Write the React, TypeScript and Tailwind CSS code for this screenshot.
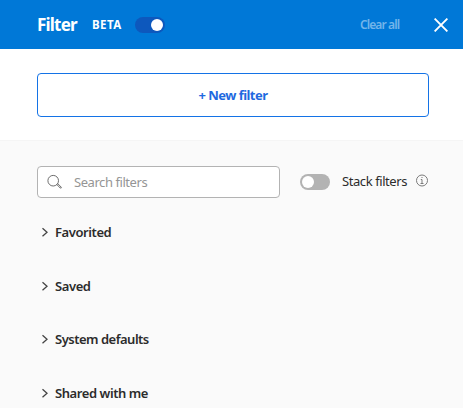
const sections = [
  { label: 'Favorited', tracking: 'tracking-[-0.42px]' },
  { label: 'Saved', tracking: 'tracking-[-0.4px]' },
  { label: 'System defaults', tracking: 'tracking-[-0.5px]' },
  { label: 'Shared with me', tracking: 'tracking-[-0.43px]' },
];

function Toggle({ on }: { on?: boolean }) {
  return on ? (
    <span className="flex h-4 w-[30px] shrink-0 items-center justify-end rounded-full bg-[#0d58bd] px-0.5">
      <span className="size-3 rounded-full bg-white" />
    </span>
  ) : (
    <span className="flex h-4 w-[30px] shrink-0 items-center rounded-full bg-[#b3b3b3] px-0.5">
      <span className="size-3 rounded-full bg-white" />
    </span>
  );
}

export default function App() {
  return (
    <div className="flex h-[408px] w-[463px] flex-col overflow-hidden bg-[#fafafa] font-['Noto_Sans',sans-serif] whitespace-nowrap">
      <header className="flex h-[49px] shrink-0 items-center bg-[#0078d7] pr-[15px] pl-[37px] text-white">
        <h1 className="w-[55px] text-[17px] leading-6 font-bold tracking-[-0.8px]">Filter</h1>
        <span className="w-[43px] text-[11.5px] leading-4 font-bold tracking-[0.45px]">BETA</span>
        <Toggle on />
        <span className="ml-auto w-[74px] pt-px text-[12px] leading-4 font-semibold tracking-[-0.9px] text-[#73b5ea]">Clear all</span>
        <svg className="size-[14px] shrink-0" viewBox="0 0 14 14" fill="none" stroke="currentColor" strokeWidth="1.9">
          <path d="M.6 .6l12.8 12.8M13.4 .6L.6 13.4" />
        </svg>
      </header>
      <div className="h-[92px] shrink-0 border-b border-[#f5f5f5] bg-white pt-6 pr-[34px] pl-[37px]">
        <button className="flex h-11 w-full items-center justify-center rounded border border-[#1473e6] pt-px text-[13px] font-bold tracking-[-0.55px] text-[#1e69e0]">
          + New filter
        </button>
      </div>
      <div className="flex items-start pt-[25px] pl-[37px]">
        <div className="flex h-8 w-[243px] items-center rounded border border-[#b3b3b3] bg-white pl-[9px]">
          <svg className="size-4 shrink-0" viewBox="0 0 16 16" fill="none" stroke="#6e6e6e">
            <circle cx="6.2" cy="6.7" r="5.3" />
            <path d="M9.9 10.6l.9-.9 3.4 3.4q.5 1.3-.9 1z" />
          </svg>
          <span className="ml-[11px] pt-px text-[13px] tracking-[-0.44px] text-[#959595]">Search filters</span>
        </div>
        <div className="mt-2 ml-5 flex h-4 items-center">
          <Toggle />
          <span className="ml-3 w-[74px] text-[13px] tracking-[-0.42px] text-[#2c2c2c]">Stack filters</span>
          <svg className="mb-[3px] size-[13px]" viewBox="0 0 13 13" fill="none" stroke="#7a7a7a">
            <circle cx="6" cy="6.5" r="5.5" />
            <path d="M6 3v1M4.8 5.5H6v4M4.5 9.5h3" />
          </svg>
        </div>
      </div>
      <ul className="flex flex-col pt-6 pl-[41px]">
        {sections.map(({ label, tracking }) => (
          <li key={label} className="flex h-[53.6px] shrink-0 items-start">
            <svg className="mt-[5px] mr-1.5 h-[10px] w-2" viewBox="0 0 8 10" fill="none" stroke="#444" strokeWidth="1.3">
              <path d="M1.5 1.3L6 5.3 1.5 9.3" />
            </svg>
            <span className={`text-[13px] leading-5 font-semibold text-[#2c2c2c] ${tracking}`}>{label}</span>
          </li>
        ))}
      </ul>
    </div>
  );
}
